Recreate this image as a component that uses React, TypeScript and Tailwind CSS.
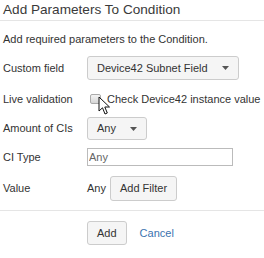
import React from 'react';

const font = { fontFamily: '"Liberation Sans", Arial, sans-serif' };

function Caret() {
  return (
    <svg width="7" height="4" viewBox="0 0 7 4" className="shrink-0">
      <path d="M0 0 L7 0 L3.5 4 Z" fill="#555" />
    </svg>
  );
}

function Cursor() {
  return (
    <svg
      width="13"
      height="20"
      viewBox="0 0 13 20"
      className="pointer-events-none absolute left-[98px] top-[96px]"
    >
      <path
        d="M1 1 L1 15 L4.5 11.8 L7 18 L9.3 17 L6.8 11 L11.5 11 Z"
        fill="#fff"
        stroke="#111"
        strokeWidth="1"
        strokeLinejoin="round"
      />
    </svg>
  );
}

function Row({ label, children, className }: { label: string; children: React.ReactNode; className: string }) {
  return (
    <div className={`flex items-center ${className}`}>
      <div className="w-[84px] shrink-0 text-[11px] text-[#333]">{label}</div>
      <div className="flex items-center">{children}</div>
    </div>
  );
}

export default function App() {
  return (
    <div className="relative h-[258px] w-[264px] overflow-hidden bg-white" style={font}>
      <div className="flex h-[21px] items-center border-b border-[#e5e5e5] pl-[3px]">
        <h2 className="text-[13.6px] leading-[20px] text-[#3a3a3a]">Add Parameters To Condition</h2>
      </div>

      <div className="pl-[3px]">
        <p className="mt-[11px] text-[11px] leading-[14px] text-[#333]">Add required parameters to the Condition.</p>

        <Row label="Custom field" className="mt-[10px] h-[24px]">
          <button className="flex h-[24px] w-[152px] items-center justify-between rounded-[3px] border border-[#ccc] bg-[#f5f5f5] pl-[9px] pr-[9px] text-[11px] text-[#333]">
            <span>Device42 Subnet Field</span>
            <Caret />
          </button>
        </Row>

        <Row label="Live validation" className="mt-[10px] h-[18px]">
          <span className="ml-[3px] h-[10px] w-[11px] rounded-[2px] border border-[#aaa] bg-gradient-to-b from-[#f4f4f4] to-[#d6d6d6]" />
          <span className="ml-[6px] whitespace-nowrap text-[11px] text-[#333]">Check Device42 instance value</span>
        </Row>

        <Row label="Amount of CIs" className="mt-[9px] h-[23px]">
          <button className="flex h-[23px] w-[60px] items-center justify-between rounded-[3px] border border-[#ccc] bg-[#f5f5f5] pl-[9px] pr-[9px] text-[11px] text-[#333]">
            <span>Any</span>
            <Caret />
          </button>
        </Row>

        <Row label="CI Type" className="mt-[8px] h-[18px]">
          <input
            placeholder="Any"
            className="h-[18px] w-[146px] border border-[#bbb] px-[1px] text-[11px] text-[#333] outline-none placeholder:text-[#666]"
          />
        </Row>

        <Row label="Value" className="mt-[10px] h-[25px]">
          <span className="text-[11px] text-[#333]">Any</span>
          <button className="ml-[4px] h-[25px] rounded-[3px] border border-[#ccc] bg-[#f5f5f5] px-[9px] text-[11px] text-[#333]">
            Add Filter
          </button>
        </Row>
      </div>

      <div className="mt-[9px] border-t border-[#e5e5e5]" />

      <div className="ml-[87px] mt-[10px] flex items-center">
        <button className="h-[24px] rounded-[3px] border border-[#ccc] bg-[#f5f5f5] px-[9px] text-[11px] text-[#333]">Add</button>
        <a className="ml-[13px] text-[11px] text-[#3b73af]">Cancel</a>
      </div>

      <Cursor />
    </div>
  );
}
